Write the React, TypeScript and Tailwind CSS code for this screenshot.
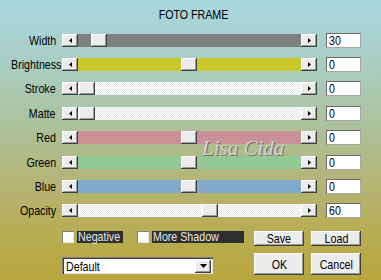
import React from "react";

interface SliderRowProps {
  label: string;
  value: string;
  track: string;
  offset: string;
}

const dither =
  "bg-[repeating-conic-gradient(#ffffff_0%_25%,#e6e6e6_0%_50%)] bg-[length:2px_2px]";

const rows: SliderRowProps[] = [
  { label: "Width", value: "30", track: "bg-[#808080]", offset: "w-[13px]" },
  { label: "Brightness", value: "0", track: "bg-[#c9c92c]", offset: "w-[103px]" },
  { label: "Stroke", value: "0", track: dither, offset: "w-[1px]" },
  { label: "Matte", value: "0", track: dither, offset: "w-[1px]" },
  { label: "Red", value: "0", track: "bg-[#c99196]", offset: "w-[103px]" },
  { label: "Green", value: "0", track: "bg-[#91c893]", offset: "w-[103px]" },
  { label: "Blue", value: "0", track: "bg-[#80a9ca]", offset: "w-[103px]" },
  { label: "Opacity", value: "60", track: dither, offset: "w-[124px]" },
];

const raised =
  "bg-[#ececec] shadow-[inset_-1px_-1px_#404040,inset_1px_1px_#ffffff,inset_-2px_-2px_#9a9a9a]";

// the dialog font is a narrow sans, no narrow face installed so squeeze it
function Narrow({ children, origin }: { children: React.ReactNode; origin: string }) {
  return <span className={`inline-block whitespace-nowrap scale-x-[0.82] ${origin}`}>{children}</span>;
}

function Arrow({ dir }: { dir: "left" | "right" | "down" }) {
  if (dir === "down") {
    return (
      <svg width="7" height="4" viewBox="0 0 7 4">
        <polygon points="0,0 7,0 3.5,4" fill="#000" />
      </svg>
    );
  }
  return (
    <svg width="3" height="5" viewBox="0 0 3 5">
      <polygon points={dir === "left" ? "3,0 3,5 0,2.5" : "0,0 0,5 3,2.5"} fill="#000" />
    </svg>
  );
}

function SliderRow({ label, value, track, offset }: SliderRowProps) {
  return (
    <div className="h-[24.4px] flex items-center">
      <div className="w-[56px] text-right leading-none text-black">
        <Narrow origin="origin-right">{label}</Narrow>
      </div>
      <div className="ml-[6px] w-[255px] h-[13px] flex">
        <div className={`w-[16px] h-full flex items-center justify-center ${raised}`}>
          <Arrow dir="left" />
        </div>
        <div className={`flex-1 h-full flex ${track}`}>
          <div className={`${offset} h-full`} />
          <div className={`w-[16px] h-full ${raised}`} />
        </div>
        <div className={`w-[16px] h-full flex items-center justify-center ${raised}`}>
          <Arrow dir="right" />
        </div>
      </div>
      <div className="ml-[9px] w-[35px] h-[15px] bg-white border border-t-[#6a6a6a] border-l-[#6a6a6a] border-b-[#a8a8a8] border-r-[#a8a8a8] pl-[2px] leading-[13px] text-black">
        <Narrow origin="origin-left">{value}</Narrow>
      </div>
    </div>
  );
}

function Checkbox({ label, width }: { label: string; width: string }) {
  return (
    <div className="flex items-center">
      <div className="w-[12px] h-[12px] bg-white shadow-[inset_1px_1px_#808080,inset_-1px_-1px_#e8e8e8]" />
      <div className={`ml-[3px] h-[12px] bg-[#2f2f2f] text-[#e6e6e6] leading-[12px] px-[1px] ${width}`}>
        <Narrow origin="origin-left">{label}</Narrow>
      </div>
    </div>
  );
}

function Button({ label, height }: { label: string; height: string }) {
  return (
    <div className={`w-[50px] ${height} flex items-center justify-center text-black leading-none ${raised}`}>
      <Narrow origin="origin-center">{label}</Narrow>
    </div>
  );
}

export default function App() {
  return (
    <div className="w-[381px] h-[280px] overflow-hidden relative bg-[linear-gradient(180deg,#a9d6e0_0%,#a9cdbf_25%,#acc3a0_42%,#b3b67c_62%,#b8ad56_82%,#b8a63c_100%)] font-['Liberation_Sans',sans-serif] text-[13px]">
      <div className="h-[28px] pt-[8px] text-center leading-[13px] text-black pl-[6px]">
        <Narrow origin="origin-center">FOTO FRAME</Narrow>
      </div>

      {rows.map((r) => (
        <SliderRow key={r.label} {...r} />
      ))}

      <div className="mt-[7px] flex">
        <div className="w-[254px] pl-[62px] flex flex-col">
          <div className="h-[13px] flex items-center">
            <Checkbox label="Negative" width="w-[46px]" />
            <div className="ml-[14px]">
              <Checkbox label="More Shadow" width="w-[92px]" />
            </div>
          </div>
          <div className="mt-[14px] w-[151px] h-[17px] bg-white flex items-center shadow-[inset_1px_1px_#808080,inset_2px_2px_#404040,inset_-1px_-1px_#e0e0e0]">
            <div className="flex-1 pl-[4px] pt-[1px] leading-none text-black">
              <Narrow origin="origin-left">Default</Narrow>
            </div>
            <div className={`mr-[2px] mt-[1px] w-[16px] h-[13px] flex items-center justify-center ${raised}`}>
              <Arrow dir="down" />
            </div>
          </div>
        </div>
        <div className="flex flex-col pt-[1px]">
          <div className="flex gap-[7px]">
            <Button label="Save" height="h-[15px]" />
            <Button label="Load" height="h-[15px]" />
          </div>
          <div className="mt-[7px] flex gap-[7px]">
            <Button label="OK" height="h-[22px]" />
            <Button label="Cancel" height="h-[22px]" />
          </div>
        </div>
      </div>

      <div className="absolute left-[202px] top-[138px] font-['Liberation_Serif',serif] italic text-[21px] leading-none text-[#d2d2d2] [text-shadow:1px_1px_0_#6e6e6e]">
        Lisa Cida
      </div>
    </div>
  );
}
